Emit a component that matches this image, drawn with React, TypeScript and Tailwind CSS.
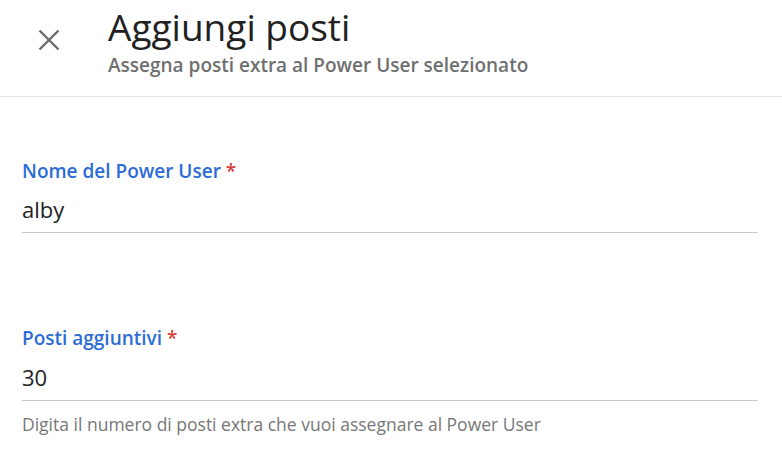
import React from "react";

export default function App() {
  return (
    <div className="w-[782px] h-[458px] bg-white overflow-hidden" style={{ fontFamily: '"Open Sans", sans-serif' }}>
      <header className="flex items-start border-b border-[#e3e3e3] h-[97px]">
        <button className="w-[108px] h-[80px] flex items-center justify-start pl-[38px]">
          <svg width="22" height="22" viewBox="0 0 22 22" className="block">
            <path d="M1.5 1.5 L20.5 20.5 M20.5 1.5 L1.5 20.5" stroke="#6b6b6b" strokeWidth="2.4" strokeLinecap="butt" />
          </svg>
        </button>
        <div className="flex flex-col pt-[3px]">
          <h1 className="text-[37px] leading-[48px] text-[#212121] font-normal">Aggiungi posti</h1>
          <p className="text-[19px] leading-[24px] font-semibold text-[#6f6f6f] mt-[2px]">Assegna posti extra al Power User selezionato</p>
        </div>
      </header>
      <main className="px-[22px] pr-[24px] pt-[62px] flex flex-col">
        <div className="flex flex-col">
          <label className="text-[19px] leading-[24px] font-semibold text-[#2c6cd6]">
            Nome del Power User <span className="text-[#d83b3b]">*</span>
          </label>
          <div className="text-[22px] leading-[28px] text-[#222] mt-[12px] pb-[9px] border-b border-[#c9c9c9]">alby</div>
        </div>
        <div className="flex flex-col mt-[93px]">
          <label className="text-[19px] leading-[24px] font-semibold text-[#2c6cd6]">
            Posti aggiuntivi <span className="text-[#d83b3b]">*</span>
          </label>
          <div className="text-[22px] leading-[28px] text-[#222] mt-[13px] pb-[9px] border-b border-[#c9c9c9]">30</div>
          <p className="text-[17.5px] leading-[22px] text-[#777] mt-[12px]">Digita il numero di posti extra che vuoi assegnare al Power User</p>
        </div>
      </main>
    </div>
  );
}
